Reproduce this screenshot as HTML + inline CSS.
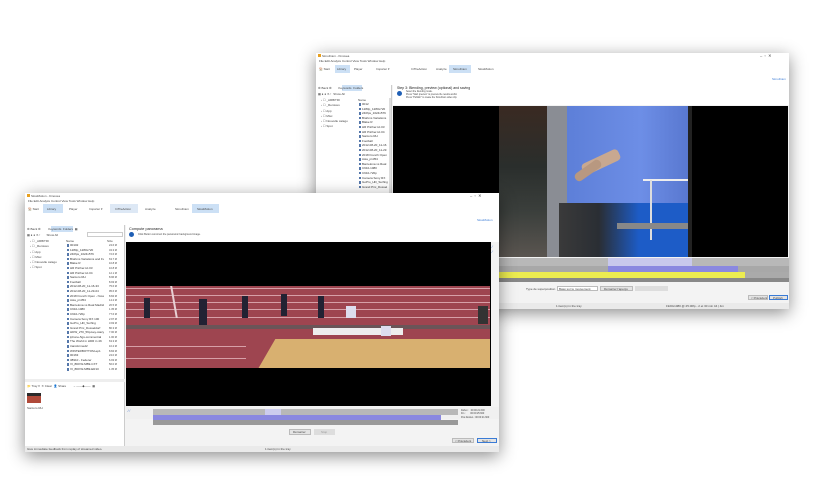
<!DOCTYPE html>
<html><head><meta charset="utf-8"><style>
*{margin:0;padding:0;box-sizing:border-box}
body{width:820px;height:484px;background:#fff;position:relative;overflow:hidden;font-family:"Liberation Sans",sans-serif;font-size:3px;color:#333}
.a{position:absolute}
.win{position:absolute;background:#fff;box-shadow:0 4px 16px rgba(0,0,0,.45);overflow:hidden}
.t{position:absolute;white-space:nowrap;font-size:3px;color:#444}
.lst div{height:4.6px;font-size:3px;white-space:nowrap;overflow:hidden;color:#333;padding-left:4px;position:relative}
.lst div:before{content:"";position:absolute;left:0.5px;top:1px;width:2.5px;height:2.5px;background:#5577aa}
</style></head><body>

<!-- BACK WINDOW -->
<div class="win" style="left:316px;top:53px;width:473px;height:256px;background:#f3f3f3">
  <div class="a" style="left:0;top:0;width:473px;height:5px;background:#fff"></div>
  <div class="a" style="left:2px;top:1px;width:3px;height:3px;background:#e8a020"></div>
  <span class="t" style="left:6px;top:0.5px">SimulCam - Kinovea</span>
  <span class="t" style="left:444px;top:0;font-size:4px">–&nbsp;&nbsp;▫&nbsp;&nbsp;✕</span>
  <div class="a" style="left:0;top:5px;width:473px;height:5px;background:#fff"></div>
  <span class="t" style="left:3px;top:6px">File Edit Analyze Control View Tools Window Help</span>
  <div class="a" style="left:0;top:10px;width:473px;height:11px;background:#fff"></div>
  <span class="t" style="left:3px;top:14px">🏠 Start</span>
  <div class="a" style="left:19px;top:12px;width:15px;height:8px;background:#cce0f5"></div>
  <span class="t" style="left:21px;top:14px">Library</span>
  <span class="t" style="left:38px;top:14px">Player</span>
  <span class="t" style="left:60px;top:14px">Importer ▾</span>
  <span class="t" style="left:95px;top:14px">InTheAction</span>
  <span class="t" style="left:120px;top:14px">Analyze</span>
  <div class="a" style="left:133px;top:12px;width:22px;height:8px;background:#cce0f5"></div>
  <span class="t" style="left:137px;top:14px">SimulCam</span>
  <span class="t" style="left:162px;top:14px">SlowMotion</span>
  <div class="a" style="left:0;top:21px;width:473px;height:11px;background:#fff"></div>
  <span class="t" style="left:456px;top:24px;color:#3a7bd5">SimulCam</span>
  <!-- left panel -->
  <div class="a" style="left:0;top:32px;width:76px;height:224px;background:#fff;border-right:1px solid #ccc"></div>
  <div class="a" style="left:26px;top:32px;width:20px;height:6px;background:#cce0f5"></div>
  <span class="t" style="left:2px;top:33px">⚙ Back ⚙ &nbsp;&nbsp;&nbsp;&nbsp;&nbsp;&nbsp;&nbsp;Keywords &nbsp;Folders</span>
  <span class="t" style="left:2px;top:39px">▦ ● ● ✕ ⁄ &nbsp;&nbsp;Show All</span>
  <span class="t" style="left:5px;top:45px;line-height:5.3px">› ☐ _ARBITRI<br>› ☐ _Remixes<br>› ☐ App<br>› ☐ Misc<br>› ☐ Nouvelle catégo<br>› ☐ Spot</span>
  <div class="a lst" style="left:42px;top:45px;width:32px">
    <span class="t" style="position:static">Name</span>
    <div>0012</div><div>1280p_1280x720</div><div>240fps_1024x576</div><div>Brahms Variations</div><div>Blake R</div><div>HR Pitcher.txt.03</div><div>HR Pitcher.txt.04</div><div>Santoro RH</div><div>Football</div><div>2012-08-20_11-16</div><div>2012-08-20_11-29</div><div>2018 French Open</div><div>Asia_p1354</div><div>Barcelona vs Real</div><div>C910-1080</div><div>C910-720p</div><div>Camera Sony RX</div><div>GoPro_HD_Surfing</div><div>Grand Prix_Dussel</div>
  </div>
  <div class="a" style="left:73px;top:45px;width:2px;height:100px;background:#ddd"></div>
  <!-- main -->
  <div class="a" style="left:77px;top:32px;width:396px;height:20px;background:#fff"></div>
  <span class="t" style="left:81px;top:33px;font-size:3.5px;color:#222">Step 3: Blending, preview (optional) and saving</span>
  <div class="a" style="left:81px;top:38px;width:5px;height:5px;border-radius:50%;background:#1f5fb5"></div>
  <span class="t" style="left:90px;top:38px;line-height:3.2px;font-size:2.3px">Select the blending mode.<br>Press "Start preview" to preview the results and/or<br>Press "Publish" to create the SimulCam video clip.</span>
  <div class="a" style="left:77px;top:53px;width:395px;height:151px;background:#000"></div>
  <!-- diving image -->
  <div class="a" style="left:183px;top:53px;width:56px;height:151px;background:linear-gradient(180deg,#3a2a22,#2a2e2c 40%,#3b3f3c 70%,#5a5550)"></div>
  <div class="a" style="left:231px;top:53px;width:20px;height:151px;background:#8a8d94"></div>
  <div class="a" style="left:251px;top:53px;width:123px;height:151px;background:linear-gradient(90deg,#5d7fd8,#6d8ee6 60%,#5877cf)"></div>
  <div class="a" style="left:251px;top:150px;width:123px;height:54px;background:#1d5cc7"></div>
  <div class="a" style="left:243px;top:150px;width:80px;height:54px;background:linear-gradient(90deg,#3a3a3a,#2a2e34 50%,transparent)"></div>
  <div class="a" style="left:327px;top:126px;width:46px;height:2px;background:#eee"></div>
  <div class="a" style="left:334px;top:127px;width:2px;height:60px;background:#ddd"></div>
  <div class="a" style="left:301px;top:170px;width:73px;height:6px;background:#888"></div>
  <div class="a" style="left:265px;top:103px;width:40px;height:12px;background:#c8a890;transform:rotate(-25deg);border-radius:4px"></div>
  <div class="a" style="left:257px;top:113px;width:30px;height:9px;background:#b89880;transform:rotate(-35deg);border-radius:4px"></div>
  <div class="a" style="left:372px;top:53px;width:4px;height:151px;background:#222"></div>
  <!-- timeline -->
  <div class="a" style="left:77px;top:205px;width:396px;height:8px;background:#b8b8b8"></div>
  <div class="a" style="left:292px;top:205px;width:84px;height:8px;background:#c8c8ec"></div>
  <div class="a" style="left:77px;top:213px;width:396px;height:6px;background:#a8a8a8"></div>
  <div class="a" style="left:292px;top:213px;width:130px;height:6px;background:#8a88e0"></div>
  <div class="a" style="left:77px;top:219px;width:352px;height:6px;background:#ecec50"></div>
  <div class="a" style="left:429px;top:219px;width:44px;height:6px;background:#aaa"></div>
  <div class="a" style="left:77px;top:225px;width:396px;height:4px;background:#888"></div>
  <span class="t" style="left:210px;top:234px">Type de superposition</span>
  <div class="a" style="left:241px;top:233px;width:41px;height:5px;background:#fff;border:1px solid #bbb"></div>
  <span class="t" style="left:243px;top:234px">Basé sur le mouvement</span>
  <div class="a" style="left:284px;top:233px;width:33px;height:5px;background:#e4e4e4;border:1px solid #bbb"></div>
  <span class="t" style="left:288px;top:234px">Démarrer l'aperçu</span>
  <div class="a" style="left:319px;top:233px;width:33px;height:5px;background:#ddd"></div>
  <div class="a" style="left:432px;top:242px;width:20px;height:5px;background:#e4e4e4;border:1px solid #bbb"></div>
  <span class="t" style="left:435px;top:243px">&lt; Précédent</span>
  <div class="a" style="left:453px;top:242px;width:19px;height:5px;background:#e4e4e4;border:1px solid #3a7bd5"></div>
  <span class="t" style="left:457px;top:243px">Publish</span>
  <div class="a" style="left:0;top:250px;width:473px;height:6px;background:#eaeaea"></div>
  <span class="t" style="left:240px;top:251px">1 item(s) in the tray</span>
  <span class="t" style="left:350px;top:251px">1920x1080 @ 25.00fp - 2 et 30 min 44 | 4m</span>
</div>

<!-- FRONT WINDOW -->
<div class="win" style="left:25px;top:193px;width:474px;height:259px;background:#f3f3f3">
  <div class="a" style="left:0;top:0;width:474px;height:5px;background:#fff"></div>
  <div class="a" style="left:2px;top:1px;width:3px;height:3px;background:#e8a020"></div>
  <span class="t" style="left:6px;top:0.5px">SlowMotion - Kinovea</span>
  <span class="t" style="left:445px;top:0;font-size:4px">–&nbsp;&nbsp;▫&nbsp;&nbsp;✕</span>
  <div class="a" style="left:0;top:5px;width:474px;height:5px;background:#fff"></div>
  <span class="t" style="left:3px;top:6px">File Edit Analyze Control View Tools Window Help</span>
  <div class="a" style="left:0;top:10px;width:474px;height:11px;background:#fff"></div>
  <span class="t" style="left:3px;top:14px">🏠 Start</span>
  <div class="a" style="left:18px;top:11px;width:20px;height:9px;background:#cce0f5"></div>
  <span class="t" style="left:22px;top:14px">Library</span>
  <span class="t" style="left:44px;top:14px">Player</span>
  <span class="t" style="left:64px;top:14px">Importer ▾</span>
  <div class="a" style="left:85px;top:11px;width:28px;height:9px;background:#dde8f5"></div>
  <span class="t" style="left:90px;top:14px">InTheAction</span>
  <span class="t" style="left:120px;top:14px">Analyze</span>
  <span class="t" style="left:150px;top:14px">SimulCam</span>
  <div class="a" style="left:167px;top:11px;width:27px;height:9px;background:#cce0f5"></div>
  <span class="t" style="left:172px;top:14px">SlowMotion</span>
  <div class="a" style="left:0;top:21px;width:474px;height:11px;background:#fff"></div>
  <span class="t" style="left:452px;top:25px;color:#3a7bd5">SlowMotion</span>
  <!-- left -->
  <div class="a" style="left:0;top:32px;width:100px;height:221px;background:#fff;border-right:1px solid #ccc"></div>
  <div class="a" style="left:26px;top:33px;width:22px;height:6px;background:#cce0f5"></div>
  <span class="t" style="left:2px;top:34px">⚙ Back ⚙ &nbsp;&nbsp;&nbsp;&nbsp;&nbsp;&nbsp;&nbsp;&nbsp;Keywords &nbsp;Folders &nbsp;▦</span>
  <span class="t" style="left:2px;top:40px">▦ ● ● ✕ ⁄ &nbsp;&nbsp;&nbsp;&nbsp;&nbsp;&nbsp;&nbsp;Show All</span>
  <div class="a" style="left:62px;top:39px;width:36px;height:5px;border:1px solid #ccc;background:#fff"></div>
  <span class="t" style="left:5px;top:46px;line-height:5.3px">› ☐ _ARBITRI<br>› ☐ _Remixes<br>› ☐ App<br>› ☐ Misc<br>› ☐ Nouvelle catégo<br>› ☐ Spot</span>
  <div class="a lst" style="left:41px;top:46px;width=38px;width:38px">
    <span class="t" style="position:static">Name</span>
    <div>00102</div><div>1280p_1280x720</div><div>240fps_1024x576</div><div>Brahms Variations and Fu...</div><div>Blake R</div><div>HR Pitcher.txt.03</div><div>HR Pitcher.txt.04</div><div>Santoro RH</div><div>Football</div><div>2012-08-20_11-16-33</div><div>2012-08-20_11-29-04</div><div>2018 French Open - Novak</div><div>Asia_p1354</div><div>Barcelona vs Real Madrid</div><div>C910-1080</div><div>C910-720p</div><div>Camera Sony RX 100</div><div>GoPro_HD_Surfing</div><div>Grand Prix_Dusseldorf</div><div>HDW_270_59p-key-stacy</div><div>iphone-5gs-commercial</div><div>The World in HDR in 4K</div><div>transformed2</div><div>WINTERBOTTOM-ep1</div><div>00163</div><div>38910 - Federer</div><div>VI_8DKW-MB9-CXT</div><div>VI_8DKW-MB9-ER10</div>
  </div>
  <div class="a lst" style="left:82px;top:46px;width:16px">
    <span class="t" style="position:static">Size</span>
  </div>
  <span class="t" style="left:84px;top:51px;line-height:4.6px;font-size:2.6px">24.6 M<br>34.3 M<br>72.6 M<br>63.7 M<br>10.8 M<br>10.8 M<br>12.1 M<br>8.96 M<br>8.93 M<br>75.6 M<br>95.6 M<br>8.84 M<br>14.2 M<br>20.5 M<br>1.35 M<br>77.6 M<br>2.97 M<br>3.93 M<br>80.3 M<br>7.00 M<br>1.00 M<br>63.3 M<br>10.2 M<br>8.84 M<br>24.0 M<br>6.93 M<br>56.0 M<br>1.35 M</span>
  <div class="a" style="left:0;top:186px;width:100px;height:3px;background:#eee"></div>
  <span class="t" style="left:2px;top:191px">📁 Tray ▾ &nbsp;✕ Clear &nbsp;👤 Share &nbsp;&nbsp;&nbsp;&nbsp;&nbsp;&nbsp;&nbsp;&nbsp;− ——◆—— &nbsp;▦</span>
  <div class="a" style="left:2px;top:200px;width:14px;height:10px;background:linear-gradient(#2a2a2a 30%,#b04a3a 30%)"></div>
  <span class="t" style="left:2px;top:213px">Santoro RH</span>
  <!-- main -->
  <div class="a" style="left:101px;top:32px;width:373px;height:17px;background:#fff"></div>
  <span class="t" style="left:104px;top:34px;font-size:3.8px;color:#222">Compute panorama</span>
  <div class="a" style="left:104px;top:39px;width:5px;height:5px;border-radius:50%;background:#1f5fb5"></div>
  <span class="t" style="left:113px;top:40px;font-size:2.5px">Click Button construct the panoramic background image.</span>
  <div class="a" style="left:101px;top:49px;width:365px;height:164px;background:#000"></div>
  <span class="t" style="left:467px;top:51px;color:#4a7bd5;font-size:4px;line-height:5px">⁄<br>⁄</span>
  <!-- track -->
  <div class="a" style="left:101px;top:93px;width:364px;height:82px;background:#9e4550;overflow:hidden">
    <div class="a" style="left:0;top:2px;width:364px;height:1px;background:#d7a0a8"></div>
    <div class="a" style="left:0;top:9px;width:364px;height:1px;background:#d7a0a8"></div>
    <div class="a" style="left:0;top:16px;width:364px;height:1px;background:#d7a0a8"></div>
    <div class="a" style="left:0;top:23px;width:364px;height:1px;background:#d7a0a8"></div>
    <div class="a" style="left:0;top:31px;width:364px;height:1px;background:#d7a0a8"></div>
    <div class="a" style="left:0;top:39px;width:364px;height:4px;background:#6a5558"></div>
    <div class="a" style="left:0;top:60px;width:120px;height:1px;background:#d7a0a8"></div>
    <div class="a" style="left:0;top:72px;width:120px;height:1px;background:#d7a0a8"></div>
    <div class="a" style="left:47px;top:0;width:2px;height:32px;background:#e8d0d4;transform:skewX(10deg)"></div>
    <div class="a" style="left:132px;top:53px;width:240px;height:30px;background:#d8b070;transform:skewX(-30deg);transform-origin:bottom left"></div>
    <div class="a" style="left:187px;top:42px;width:90px;height:7px;background:#eee"></div>
    <div class="a" style="left:18px;top:12px;width:6px;height:20px;background:#223"></div>
    <div class="a" style="left:73px;top:13px;width:8px;height:26px;background:#223"></div>
    <div class="a" style="left:116px;top:10px;width:6px;height:22px;background:#223"></div>
    <div class="a" style="left:155px;top:8px;width:6px;height:22px;background:#223"></div>
    <div class="a" style="left:192px;top:10px;width:6px;height:22px;background:#223"></div>
    <div class="a" style="left:220px;top:20px;width:10px;height:12px;background:#dde"></div>
    <div class="a" style="left:255px;top:40px;width:10px;height:10px;background:#dde"></div>
    <div class="a" style="left:352px;top:20px;width:10px;height:18px;background:#333"></div>
  </div>
  <!-- timeline -->
  <div class="a" style="left:101px;top:214px;width:373px;height:12px;background:#f0f0f0"></div>
  <span class="t" style="left:103px;top:216px;color:#4a7bd5;font-size:3.5px">⁄ ⁄</span>
  <div class="a" style="left:128px;top:216px;width:305px;height:6px;background:#b8b8b8"></div>
  <div class="a" style="left:240px;top:216px;width:16px;height:6px;background:#ccccee"></div>
  <div class="a" style="left:128px;top:222px;width:288px;height:5px;background:#8a88e0"></div>
  <div class="a" style="left:128px;top:227px;width:305px;height:5px;background:#999"></div>
  <span class="t" style="left:436px;top:216px;line-height:3.3px;font-size:2.4px">Début : &nbsp;&nbsp;00:00:21.600<br>Fin : &nbsp;&nbsp;&nbsp;&nbsp;&nbsp;&nbsp;00:00:25.600<br>Pos.Déclen.: 00:00:21.600</span>
  <div class="a" style="left:264px;top:236px;width:22px;height:6px;background:#e4e4e4;border:1px solid #bbb"></div>
  <span class="t" style="left:268px;top:237px">Démarrer</span>
  <div class="a" style="left:289px;top:236px;width:21px;height:6px;background:#ddd"></div>
  <span class="t" style="left:296px;top:237px;color:#999">Stop</span>
  <div class="a" style="left:427px;top:245px;width:22px;height:5px;background:#e4e4e4;border:1px solid #bbb"></div>
  <span class="t" style="left:430px;top:246px">&lt; Précédent</span>
  <div class="a" style="left:452px;top:245px;width:20px;height:5px;background:#e4e4e4;border:1px solid #3a7bd5"></div>
  <span class="t" style="left:457px;top:246px">Next &gt;</span>
  <div class="a" style="left:0;top:253px;width:474px;height:6px;background:#eaeaea"></div>
  <span class="t" style="left:2px;top:254px">Give immediate feedback from replay of streamed video.</span>
  <span class="t" style="left:240px;top:254px">1 item(s) in the tray</span>
</div>
</body></html>
